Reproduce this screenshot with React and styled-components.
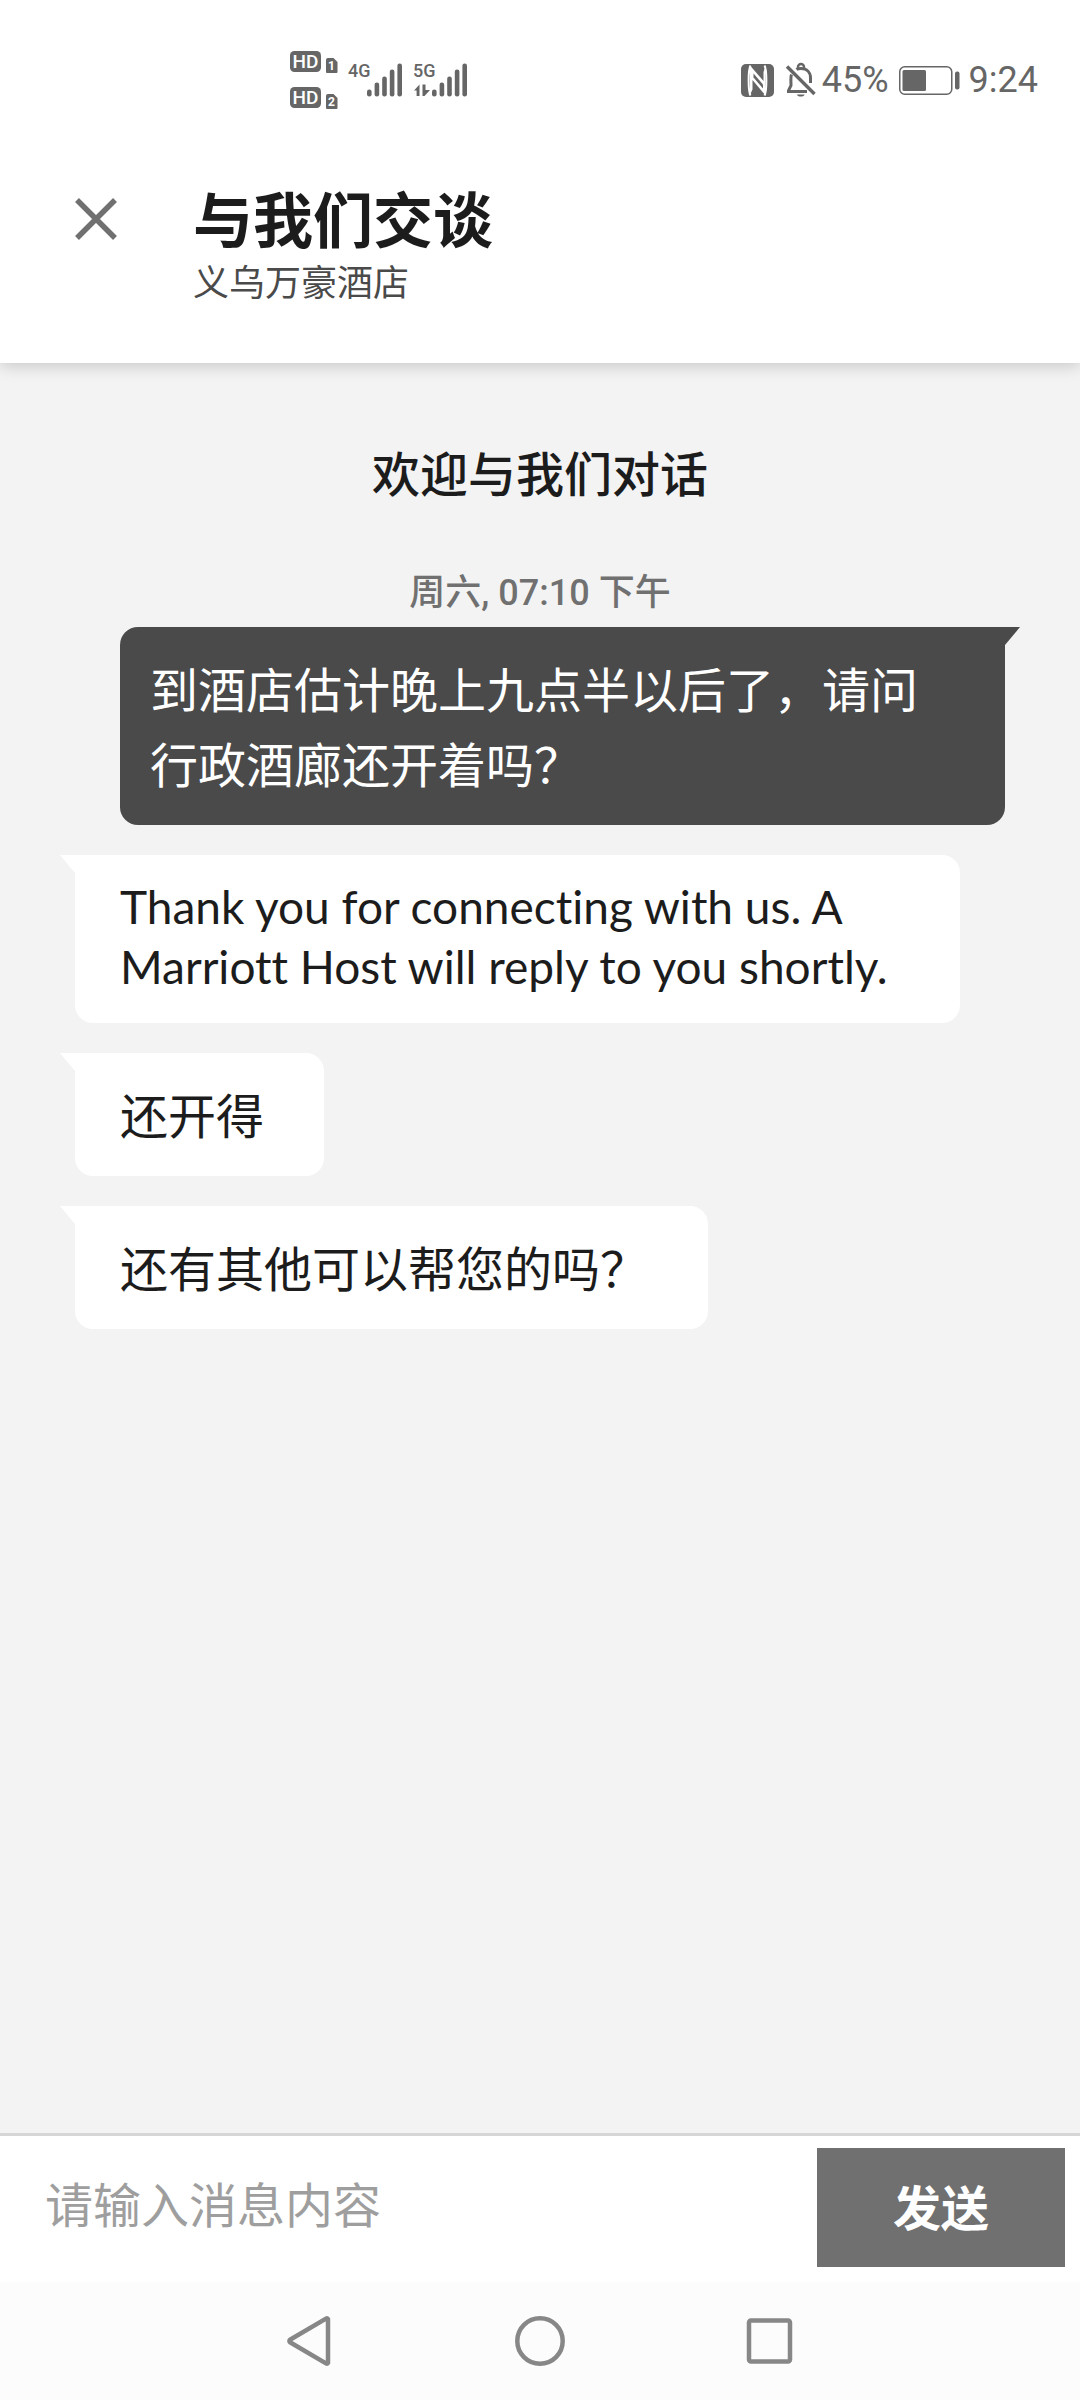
import React, { useState } from "react";
import styled, { createGlobalStyle } from "styled-components";

const GlobalStyle = createGlobalStyle`
  *, *::before, *::after { box-sizing: border-box; }
  body { margin: 0; background: #f3f3f3; }
  button, input { font: inherit; border: 0; padding: 0; margin: 0; background: none; border-radius: 0; }
  h1, h2, p, ol { margin: 0; padding: 0; }
`;

const Page = styled.div`
  display: flex;
  flex-direction: column;
  min-height: 100vh;
  font-family: Lato, "Noto Sans CJK SC", sans-serif;
  font-size: 48px;
  line-height: 75px;
  color: #1c1c1c;
`;

const TopArea = styled.div`
  background: #fff;
  box-shadow: 0 2px 16px rgba(0, 0, 0, 0.2);
`;

const StatusBar = styled.div`
  display: flex;
  justify-content: space-between;
  align-items: center;
  height: 160px;
  padding: 0 42px 0 290px;
  color: #666;
  font-family: Roboto, sans-serif;
  font-size: 36px;
  line-height: 42px;
`;

const StatusGroup = styled.div`
  display: flex;
  align-items: center;
  gap: ${(p) => p.$gap}px;
`;

const Glyph = styled.svg`
  display: block;
  flex: none;
  overflow: visible;
  font-family: Roboto, sans-serif;
`;

const Header = styled.header`
  display: flex;
  align-items: flex-start;
  gap: 76px;
  padding: 24px 48px 54px 75px;
`;

const CloseButton = styled.button`
  display: flex;
  align-items: center;
  height: 70px;
  color: #707070;
  cursor: pointer;
`;

const Title = styled.h1`
  font-size: 60px;
  line-height: 72px;
  font-weight: 700;
`;

const Subtitle = styled.p`
  font-size: 36px;
  line-height: 53px;
  color: #4a4a4a;
`;

const Conversation = styled.main`
  flex: 1;
  display: flex;
  flex-direction: column;
  padding: 75px 75px 60px;
`;

const Welcome = styled.h2`
  text-align: center;
  font-size: 48px;
  line-height: 72px;
  font-weight: 500;
`;

const DateLine = styled.p`
  margin: 56px 0 7px;
  text-align: center;
  font-family: Roboto, "Noto Sans CJK SC", sans-serif;
  font-size: 36px;
  line-height: 54px;
  font-weight: 500;
  color: #707070;
`;

const Messages = styled.ol`
  list-style: none;
  display: flex;
  flex-direction: column;
  gap: 30px;
`;

const Bubble = styled.li`
  position: relative;
  align-self: ${(p) => (p.$mine ? "flex-end" : "flex-start")};
  max-width: calc(100% - 45px);
  padding: ${(p) => (p.$latin ? "22px 60px 26px" : "25px 60px 23px")};
  padding-left: ${(p) => (p.$mine ? 30 : 45)}px;
  border-radius: ${(p) => (p.$mine ? "18px 0 18px 18px" : "0 18px 18px 18px")};
  background: ${(p) => (p.$mine ? "#4a4a4a" : "#fff")};
  color: ${(p) => (p.$mine ? "#fff" : "#1c1c1c")};
  font-size: ${(p) => (p.$latin ? 46 : 48)}px;
  line-height: ${(p) => (p.$latin ? 60 : 75)}px;
  font-variant-ligatures: none;

  &::before {
    content: "";
    position: absolute;
    top: 0;
    ${(p) => (p.$mine ? "left: 100%;" : "right: 100%;")}
    width: 15px;
    height: 18px;
    background: inherit;
    clip-path: ${(p) => (p.$mine ? "polygon(0 0, 100% 0, 0 100%)" : "polygon(0 0, 100% 0, 100% 100%)")};
  }
`;

const Composer = styled.form`
  display: flex;
  align-items: stretch;
  padding: 12px 15px 15px 0;
  border-top: 3px solid #d6d6d6;
  background: #fff;
`;

const MessageInput = styled.input`
  flex: 1;
  min-width: 0;
  padding: 0 45px 6px;
  outline: none;
  color: #1c1c1c;

  &::placeholder {
    color: #9e9e9e;
    opacity: 1;
  }
`;

const SendButton = styled.button`
  width: 248px;
  height: 119px;
  background: #707070;
  color: #fff;
  font-weight: 700;
  cursor: pointer;
`;

const NavBar = styled.nav`
  display: flex;
  justify-content: center;
  align-items: center;
  gap: 180px;
  height: 118px;
  background: #fcfcfc;
  color: #878787;
`;

const NavButton = styled.button`
  width: 50px;
  height: 50px;
  color: inherit;
  cursor: pointer;
`;

const messages = [
  { id: 1, mine: true, text: "到酒店估计晚上九点半以后了，请问行政酒廊还开着吗？" },
  { id: 2, latin: true, text: "Thank you for connecting with us. A Marriott Host will reply to you shortly." },
  { id: 3, text: "还开得" },
  { id: 4, text: "还有其他可以帮您的吗？" },
];

function HdIcon() {
  return (
    <Glyph width="47" height="58" viewBox="0 0 47 58" fill="currentColor">
      {[0, 36].map((y, i) => (
        <g key={y} transform={`translate(0 ${y})`}>
          <rect width="31" height="21" rx="4.5" />
          <text x="15.5" y="17" fontSize="19" fontWeight="500" textAnchor="middle" fill="#fff">HD</text>
          <path d="M38 7h5.500l4 4v10a1 1 0 0 1-1 1H37a1 1 0 0 1-1-1V9a2 2 0 0 1 2-2z" />
          <text x="41.500" y="19" fontSize="12" fontWeight="700" textAnchor="middle" fill="#fff">{i + 1}</text>
        </g>
      ))}
    </Glyph>
  );
}

function Signal({ label, data }) {
  return (
    <Glyph width="53" height="34" viewBox="0 0 53 34" fill="currentColor">
      <text x="-1" y="14" fontSize="18" fontWeight="500">{label}</text>
      {[7, 14, 20, 27, 33].map((h, i) => (
        <rect key={h} x={18 + i * 7.6} y={33.500 - h} width="4.600" height={h} rx="2.200" />
      ))}
      {data && <path d="M5.500 21.500V33H2.600V27.500H0zM8.500 21.500h3v5.500h4.500L10.500 33h-2z" />}
    </Glyph>
  );
}

function NfcIcon() {
  return (
    <Glyph width="33" height="33" viewBox="0 0 33 33">
      <rect width="33" height="33" rx="5" fill="currentColor" />
      <path d="M9.500 1.500C7 6 7 27 9.500 31.500M23.500 1.500C26 6 26 27 23.500 31.500" fill="none" stroke="#fff" strokeWidth="2" />
      <path d="M9 1.500 22.500 17V8L24.500 2v29.500L11.500 16v9.500L9 31z" fill="#fff" />
      <path d="M12.500 9.500 22 20.500v4L12.500 13.500z" fill="currentColor" />
    </Glyph>
  );
}

function MutedBellIcon() {
  return (
    <Glyph width="30" height="33" viewBox="0 0 30 33" fill="none" stroke="currentColor" strokeWidth="3">
      <path d="M1 2.500 28.500 30" strokeWidth="3.400" />
      <path d="M5.500 10.500C4.500 13 5 18 5 21.500L2.500 26.500v1H21" />
      <path d="M10.500 5.500C11.500 4.700 12.500 4.500 15 4.500c6 0 9.500 4 9.500 9.500v5" />
      <path d="M12 4.500V3a3 3 0 0 1 6 0v1.500" strokeWidth="2.400" />
      <path d="M11 30.500h7.500a3.800 2.500 0 0 1-7.500 0z" fill="currentColor" stroke="none" />
    </Glyph>
  );
}

function BatteryIcon() {
  return (
    <Glyph width="60" height="29" viewBox="0 0 60 29">
      <rect x="0.750" y="0.750" width="52" height="27.500" rx="5" fill="none" stroke="currentColor" strokeWidth="1.500" />
      <rect x="3.500" y="4" width="23.500" height="21" rx="1.500" fill="currentColor" />
      <rect x="56" y="5.500" width="4.500" height="18" rx="2" fill="currentColor" />
    </Glyph>
  );
}

export default function App() {
  const [draft, setDraft] = useState("");

  return (
    <Page lang="zh-CN">
      <GlobalStyle />
      <TopArea>
        <StatusBar>
          <StatusGroup $gap={12}>
            <HdIcon />
            <Signal label="4G" />
            <Signal label="5G" data />
          </StatusGroup>
          <StatusGroup $gap={10}>
            <StatusGroup $gap={12}>
              <NfcIcon />
              <StatusGroup $gap={6}>
                <MutedBellIcon />
                <span>45%</span>
              </StatusGroup>
            </StatusGroup>
            <BatteryIcon />
            <span>9:24</span>
          </StatusGroup>
        </StatusBar>

        <Header>
          <CloseButton type="button" aria-label="关闭">
            <Glyph width="42" height="42" viewBox="0 0 42 42" stroke="currentColor" strokeWidth="5.500">
              <path d="M2 2 40 40M40 2 2 40" />
            </Glyph>
          </CloseButton>
          <div>
            <Title>与我们交谈</Title>
            <Subtitle>义乌万豪酒店</Subtitle>
          </div>
        </Header>
      </TopArea>

      <Conversation>
        <Welcome>欢迎与我们对话</Welcome>
        <DateLine>周六, 07:10 下午</DateLine>
        <Messages>
          {messages.map((m) => (
            <Bubble key={m.id} $mine={m.mine} $latin={m.latin}>{m.text}</Bubble>
          ))}
        </Messages>
      </Conversation>

      <Composer onSubmit={(e) => e.preventDefault()}>
        <MessageInput
          type="text"
          aria-label="消息内容"
          placeholder="请输入消息内容"
          value={draft}
          onChange={(e) => setDraft(e.target.value)}
        />
        <SendButton type="submit">发送</SendButton>
      </Composer>

      <NavBar>
        <NavButton type="button" aria-label="返回">
          <Glyph width="50" height="50" viewBox="0 0 50 50" fill="none" stroke="currentColor" strokeWidth="4.500" strokeLinejoin="round">
            <path d="M43 3v44a1.500 1.500 0 0 1-2 .4L5 26.200a1.500 1.500 0 0 1 0-2.400L41 2.600a1.500 1.500 0 0 1 2 .4z" />
          </Glyph>
        </NavButton>
        <NavButton type="button" aria-label="主页">
          <Glyph width="50" height="50" viewBox="0 0 50 50" fill="none" stroke="currentColor" strokeWidth="4.500">
            <circle cx="25" cy="25" r="22.700" />
          </Glyph>
        </NavButton>
        <NavButton type="button" aria-label="最近任务">
          <Glyph width="50" height="50" viewBox="0 0 50 50" fill="none" stroke="currentColor" strokeWidth="4.500">
            <rect x="4" y="4.500" width="41" height="41" rx="2" />
          </Glyph>
        </NavButton>
      </NavBar>
    </Page>
  );
}
